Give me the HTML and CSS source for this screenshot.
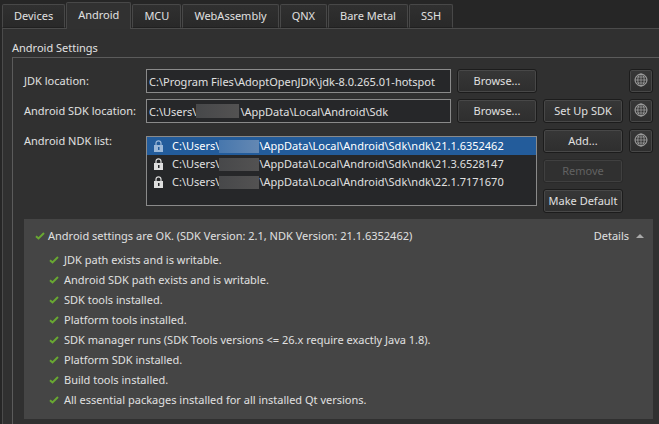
FILE: index.html
```html
<!DOCTYPE html>
<html lang="en">
<head>
<meta charset="utf-8">
<title>Devices</title>
<link rel="stylesheet" href="styles.css">
</head>
<body>
<svg class="defs" aria-hidden="true">
  <symbol id="globe" viewBox="0 0 14 14"><g fill="none" stroke="currentColor"><circle cx="7" cy="7" r="6"/><ellipse cx="7" cy="7" rx="3.200" ry="6" stroke-width=".8"/><path d="M7 1v12M1 7h12M2 4h10M2 10h10" stroke-width=".7"/></g></symbol>
  <symbol id="lock" viewBox="0 0 9 12"><path d="M2 6V3.300a2.500 2.500 0 0 1 5 0V6" fill="none" stroke="currentColor" stroke-width="1.200"/><path fill="currentColor" fill-rule="evenodd" d="M0 5h9v7H0zM4 7v3h1.500V7z"/></symbol>
  <symbol id="check" viewBox="0 0 10 8"><path d="M1 4.300 3.500 6.500 9 1" fill="none" stroke="currentColor" stroke-width="2"/></symbol>
</svg>
<nav class="tabs" role="tablist">
  <button class="tab" role="tab">Devices</button>
  <button class="tab active" role="tab" aria-selected="true">Android</button>
  <button class="tab" role="tab">MCU</button>
  <button class="tab" role="tab">WebAssembly</button>
  <button class="tab" role="tab">QNX</button>
  <button class="tab" role="tab">Bare Metal</button>
  <button class="tab" role="tab">SSH</button>
</nav>
<main class="pane">
  <h1 class="title">Android Settings</h1>
  <section class="group">
    <div class="form">
      <label class="label" for="jdk">JDK location:</label>
      <input class="field" id="jdk" type="text" value="C:\Program Files\AdoptOpenJDK\jdk-8.0.265.01-hotspot">
      <button class="button">Browse...</button>
      <button class="button web" aria-label="Download JDK"><svg class="globe"><use href="#globe"/></svg></button>

      <label class="label" for="sdk">Android SDK location:</label>
      <div class="masked">
        <input class="field" id="sdk" type="text" value="C:\Users\&#8195;&#8195;&#8195;&#8195;\AppData\Local\Android\Sdk">
        <span class="mask over"></span>
      </div>
      <button class="button">Browse...</button>
      <button class="button">Set Up SDK</button>
      <button class="button web" aria-label="Download SDK"><svg class="globe"><use href="#globe"/></svg></button>

      <span class="label" id="ndk-label">Android NDK list:</span>
      <ul class="list" role="listbox" aria-labelledby="ndk-label">
        <li class="item selected" role="option" aria-selected="true"><svg class="lock"><use href="#lock"/></svg><span>C:\Users\</span><span class="mask"></span><span>\AppData\Local\Android\Sdk\ndk\21.1.6352462</span></li>
        <li class="item" role="option"><svg class="lock"><use href="#lock"/></svg><span>C:\Users\</span><span class="mask"></span><span>\AppData\Local\Android\Sdk\ndk\21.3.6528147</span></li>
        <li class="item" role="option"><svg class="lock"><use href="#lock"/></svg><span>C:\Users\</span><span class="mask"></span><span>\AppData\Local\Android\Sdk\ndk\22.1.7171670</span></li>
      </ul>
      <button class="button side">Add...</button>
      <button class="button web" aria-label="Download NDK"><svg class="globe"><use href="#globe"/></svg></button>
      <button class="button side" disabled>Remove</button>
      <button class="button side">Make Default</button>
    </div>
    <div class="details">
      <div class="summary">
        <svg class="check"><use href="#check"/></svg>
        <span>Android settings are OK. (SDK Version: 2.1, NDK Version: 21.1.6352462)</span>
        <button class="toggle" aria-expanded="true">Details<span class="arrow"></span></button>
      </div>
      <ul class="checks">
        <li><svg class="check"><use href="#check"/></svg>JDK path exists and is writable.</li>
        <li><svg class="check"><use href="#check"/></svg>Android SDK path exists and is writable.</li>
        <li><svg class="check"><use href="#check"/></svg>SDK tools installed.</li>
        <li><svg class="check"><use href="#check"/></svg>Platform tools installed.</li>
        <li><svg class="check"><use href="#check"/></svg>SDK manager runs (SDK Tools versions &lt;= 26.x require exactly Java 1.8).</li>
        <li><svg class="check"><use href="#check"/></svg>Platform SDK installed.</li>
        <li><svg class="check"><use href="#check"/></svg>Build tools installed.</li>
        <li><svg class="check"><use href="#check"/></svg>All essential packages installed for all installed Qt versions.</li>
      </ul>
    </div>
  </section>
</main>
</body>
</html>
```
FILE: styles.css
```css
* { box-sizing: border-box; }
body {
  margin: 0;
  min-height: 100vh;
  display: flex;
  flex-direction: column;
  background: #262626;
  color: #e0e0e0;
  font: 11px/18px "Noto Sans", "Open Sans", sans-serif;
  white-space: nowrap;
}
button, input { font: inherit; color: inherit; }
ul { list-style: none; margin: 0; padding: 0; }
.defs { display: none; }

.tabs {
  display: flex;
  align-items: flex-end;
  gap: 1px;
  padding: 2px 2px 0;
  height: 28px;
}
.tab {
  height: 24px;
  padding: 0 11px;
  border: 1px solid #484848;
  border-bottom-color: #202020;
  border-radius: 2px 2px 0 0;
  background: linear-gradient(#303030, #292929);
}
.tab.active {
  position: relative;
  height: 27px;
  margin-bottom: -1px;
  padding-bottom: 2px;
  border-bottom: 0;
  background: #313131;
}

.pane {
  flex: 1;
  display: flex;
  flex-direction: column;
  margin-left: 2px;
  padding: 10px 0 0 9px;
  border: solid #4b4b4b;
  border-width: 1px 0 0 1px;
  background: #303030;
}
.title { margin: 0; font-size: 11px; line-height: 18px; font-weight: 400; }
.group {
  flex: 1;
  padding: 11px 6px 4px 11px;
  border: solid #5b5b5b;
  border-width: 1px 0 0 1px;
}

.form {
  display: grid;
  grid-template-columns: 116px 1fr 80px 80px 24px;
  grid-auto-rows: 24px;
  gap: 6px;
}
.label { grid-column: 1; line-height: 24px; }
.field {
  width: 100%;
  min-width: 0;
  height: 24px;
  padding: 0 2px;
  border: 1px solid #8a8a8a;
  background: #262729;
}
.masked { position: relative; }
.mask {
  width: 40px;
  height: 13px;
  background: linear-gradient(90deg, #47484a, #535252);
}
.mask.over { position: absolute; left: 50px; top: 5px; width: 43px; height: 14px; }
.button {
  height: 24px;
  padding: 0;
  border: 1px solid #1c1c1c;
  border-radius: 3px;
  background: linear-gradient(#373737, #2e2e2e);
  box-shadow: inset 0 0 0 1px #484848;
  text-align: center;
}
.button:disabled { color: #626262; border-color: #2a2a2a; box-shadow: inset 0 0 0 1px #404040; background: #303030; }
.web { grid-column: 5; display: grid; place-items: center; padding-bottom: 2px; color: #a8a8a8; }
.globe { width: 14px; height: 14px; }
.side { grid-column: 4; }
.list {
  grid-column: 2 / 4;
  grid-row: 3 / span 3;
  margin: 7px 0;
  border: 1px solid #8a8a8a;
  background: #262729;
}
.item { display: flex; align-items: center; height: 18px; padding-left: 7px; }
.item.selected { background: #235c9b; color: #fff; }
.item.selected .mask { background: linear-gradient(90deg, #4777ad, #6488b3); }
.lock { width: 9px; height: 12px; margin-right: 9px; color: #dedede; }
.selected .lock { color: #9cb8d8; }

.details {
  margin-top: 6px;
  padding: 7px 9px 9px 11px;
  background: #454545;
}
.summary { display: flex; align-items: center; height: 20px; }
.check { flex: none; width: 10px; height: 8px; margin-right: 3px; color: #69a832; }
.toggle {
  display: flex;
  align-items: center;
  gap: 7px;
  margin-left: auto;
  padding: 0;
  border: 0;
  background: none;
}
.arrow { border: solid transparent; border-width: 0 4px 4px; border-bottom-color: #aaa; }
.checks { padding: 4px 0 0 14px; }
.checks li { display: flex; align-items: center; height: 20px; }
.checks .check { margin-right: 5px; }
```
